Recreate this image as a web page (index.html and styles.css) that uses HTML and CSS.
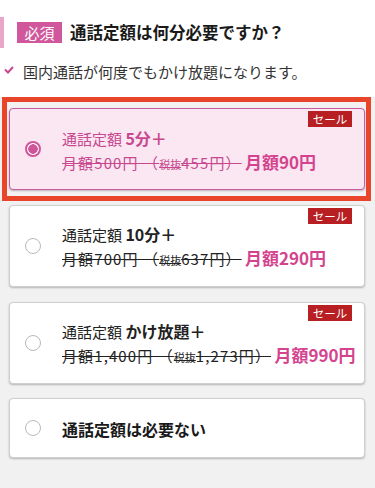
FILE: index.html
```html
<!DOCTYPE html>
<html lang="ja">
<head>
<meta charset="utf-8">
<link rel="stylesheet" href="styles.css">
</head>
<body>
<div class="page">
  <div class="header">
    <div class="title-row">
      <span class="bar"></span>
      <span class="req">必須</span>
      <h1 class="title">通話定額は何分必要ですか？</h1>
    </div>
    <div class="note-row">
      <svg class="check" width="10" height="8" viewBox="0 0 10 8"><path d="M1 3.5 L4 6.5 L9 1" fill="none" stroke="#c8478f" stroke-width="2"/></svg>
      <span class="note">国内通話が何度でもかけ放題になります。</span>
    </div>
  </div>
  <div class="list">
    <div class="focus">
      <div class="card selected">
        <span class="radio on"></span>
        <div class="txt">
          <div class="l1">通話定額 <b>5分＋</b></div>
          <div class="l2"><s>月額500円 （<small>税抜</small>455円）</s> <b class="price">月額90円</b></div>
        </div>
        <span class="sale">セール</span>
      </div>
    </div>
    <div class="card c2">
      <span class="radio"></span>
      <div class="txt">
        <div class="l1">通話定額 <b>10分＋</b></div>
        <div class="l2"><s>月額700円 （<small>税抜</small>637円）</s> <b class="price">月額290円</b></div>
      </div>
      <span class="sale">セール</span>
    </div>
    <div class="card c3">
      <span class="radio"></span>
      <div class="txt">
        <div class="l1">通話定額 <b>かけ放題＋</b></div>
        <div class="l2"><s>月額1,400円 （<small>税抜</small>1,273円）</s> <b class="price">月額990円</b></div>
      </div>
      <span class="sale">セール</span>
    </div>
    <div class="card c4 short">
      <span class="radio"></span>
      <div class="txt">
        <div class="none">通話定額は必要ない</div>
      </div>
    </div>
  </div>
</div>
</body>
</html>
```

FILE: styles.css
```css
* { box-sizing: border-box; }
html, body { margin: 0; padding: 0; }
body {
  width: 375px;
  height: 488px;
  overflow: hidden;
  background: #f1f1f1;
  font-family: "Noto Sans CJK JP", "Noto Sans", sans-serif;
  color: #222;
}
.header {
  background: #fff;
  height: 97px;
  padding-top: 17px;
}
.title-row {
  display: flex;
  align-items: center;
  height: 31px;
}
.bar {
  width: 4px;
  height: 31px;
  background: #e8a7c9;
}
.req {
  margin-left: 13px;
  width: 45px;
  height: 21px;
  background: #d0579b;
  color: #fff;
  font-size: 15px;
  line-height: 21px;
  text-align: center;
}
.title {
  margin: 0 0 0 8px;
  font-size: 16.5px;
  font-weight: 700;
  color: #1a1a1a;
  line-height: 31px;
}
.note-row {
  display: flex;
  align-items: center;
  margin-top: 14px;
  height: 20px;
}
.check {
  margin-left: 4px;
  margin-top: -4px;
}
.note {
  margin-left: 9px;
  font-size: 15px;
  color: #333;
  line-height: 20px;
}
.list {
  background: #f1f1f1;
}
.focus {
  margin-left: 2px;
  width: 369px;
  border: 5px solid #e8452b;
  padding: 6px 1px 6px 2px;
  background: #f4f1f3;
}
.card {
  position: relative;
  width: 356px;
  height: 82px;
  background: #fff;
  border: 1px solid #cfcfcf;
  border-radius: 4px;
  box-shadow: 0 1px 2px rgba(0,0,0,0.25);
  display: flex;
  align-items: center;
  padding-left: 15px;
}
.card.selected {
  background: #fae7f2;
  border-color: #c95a9f;
}
.selected .txt { padding-top: 5px; }
.c2 { margin: 4px 0 0 9px; }
.c3 { margin: 15px 0 0 9px; }
.c4 { margin: 14px 0 0 9px; }
.card.short { height: 60px; }
.radio {
  flex: none;
  width: 16px;
  height: 16px;
  border-radius: 50%;
  border: 1px solid #b9b9b9;
  background: #fff;
}
.radio.on {
  border: 2px solid #d0559b;
  background: radial-gradient(circle, #d0559b 0 4.5px, #fff 5px);
}
.txt {
  margin-left: 21px;
  padding-top: 2px;
}
.l1 {
  font-size: 15px;
  line-height: 22px;
  color: #222;
}
.l1 b { font-size: 16px; font-weight: 700; }
.selected .l1, .selected .l1 b { color: #c8478f; }
.l2 {
  font-size: 15px;
  line-height: 23px;
  color: #222;
  white-space: nowrap;
}
.l2 s { letter-spacing: 1.1px; }
.selected .l2 s { color: #c8478f; }
.l2 small { font-size: 11px; letter-spacing: 0; }
.price {
  font-size: 17px;
  font-weight: 700;
  color: #d4448e;
}
.none {
  font-size: 16px;
  font-weight: 700;
  color: #1a1a1a;
}
.sale {
  position: absolute;
  top: 2px;
  right: 12px;
  width: 44px;
  height: 16px;
  background: #b71f22;
  color: #fff;
  font-size: 11.5px;
  line-height: 16px;
  text-align: center;
}
```
